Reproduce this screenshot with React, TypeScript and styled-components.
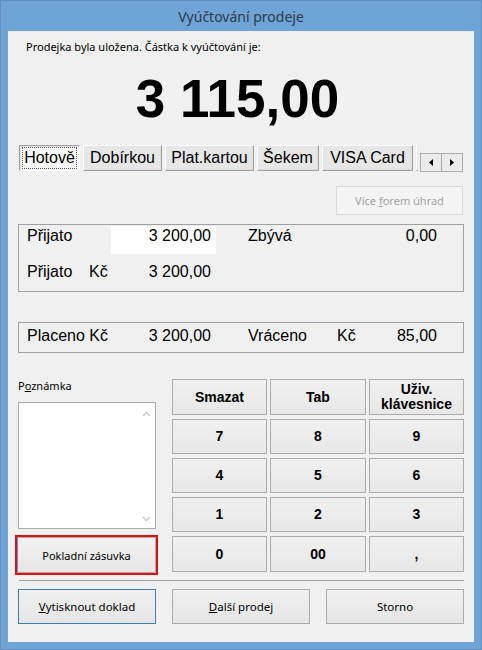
import styled, { createGlobalStyle } from "styled-components";

const GlobalStyle = createGlobalStyle`
  html, body {
    margin: 0;
    padding: 0;
    background: #6fa4d9;
  }
  * {
    box-sizing: border-box;
  }
`;

const UI_FONT = `"Noto Sans", "Open Sans", sans-serif`;
const ARIAL = `"Liberation Sans", Arial, sans-serif`;

// last tab is cut off by the scroll arrows, only its edge shows
const tabs = [
  { label: "Hotově", w: 61 },
  { label: "Dobírkou", w: 79 },
  { label: "Plat.kartou", w: 89 },
  { label: "Šekem", w: 62 },
  { label: "VISA Card", w: 91 },
  { label: "", w: 84 },
];

const keys = [
  ["Smazat", "Tab", "Uživ.\nklávesnice"],
  ["7", "8", "9"],
  ["4", "5", "6"],
  ["1", "2", "3"],
  ["0", "00", ","],
];

const App = (): JSX.Element => {
  return (
    <>
      <GlobalStyle />
      <Window>
        <TitleBar>Vyúčtování prodeje</TitleBar>
        <Client>
          <Intro>Prodejka byla uložena. Částka k vyúčtování je:</Intro>
          <Amount>3 115,00</Amount>

          <TabsRow>
            <TabStrip>
              {tabs.map((t, i) => (
                <Tab key={i} $w={t.w} $active={i === 0}>
                  {i === 0 ? <Focus>{t.label}</Focus> : t.label}
                </Tab>
              ))}
            </TabStrip>
            <Arrows>
              <ArrowBtn>
                <svg width="4" height="7" viewBox="0 0 4 7">
                  <path d="M4 0 L0 3.5 L4 7 Z" fill="#000" />
                </svg>
              </ArrowBtn>
              <ArrowBtn>
                <svg width="4" height="7" viewBox="0 0 4 7">
                  <path d="M0 0 L4 3.5 L0 7 Z" fill="#000" />
                </svg>
              </ArrowBtn>
            </Arrows>
          </TabsRow>

          <MoreButton disabled>
            Více <u>f</u>orem úhrad
          </MoreButton>

          <Panel $h={68}>
            <Grid>
              <Cell>Přijato</Cell>
              <Cell />
              <ValueBox>3 200,00</ValueBox>
              <Cell />
              <Cell>Zbývá</Cell>
              <Cell />
              <Cell $right>0,00</Cell>

              <Cell>Přijato</Cell>
              <Cell>Kč</Cell>
              <Cell $right $pr={5}>
                3 200,00
              </Cell>
              <Cell />
              <Cell />
              <Cell />
              <Cell />
            </Grid>
          </Panel>

          <Panel $h={31} $mt={30}>
            <Grid $pt={3}>
              <Cell $span={2}>Placeno Kč</Cell>
              <Cell $right $pr={5}>
                3 200,00
              </Cell>
              <Cell />
              <Cell>Vráceno</Cell>
              <Cell>Kč</Cell>
              <Cell $right>85,00</Cell>
            </Grid>
          </Panel>

          <Lower>
            <NoteColumn>
              <NoteLabel>
                P<u>o</u>známka
              </NoteLabel>
              <NoteBox>
                <NoteText />
                <ScrollBar>
                  <svg width="9" height="6" viewBox="0 0 9 6">
                    <path d="M1 5 L4.5 1.5 L8 5" stroke="#c8c8c8" strokeWidth="1.4" fill="none" />
                  </svg>
                  <svg width="9" height="6" viewBox="0 0 9 6">
                    <path d="M1 1 L4.5 4.5 L8 1" stroke="#c8c8c8" strokeWidth="1.4" fill="none" />
                  </svg>
                </ScrollBar>
              </NoteBox>
              <Highlight>
                <DrawerButton>Pokladní zásuvka</DrawerButton>
              </Highlight>
            </NoteColumn>

            <Keypad>
              {keys.flat().map((k, i) => (
                <Key key={i}>{k}</Key>
              ))}
            </Keypad>
          </Lower>

          <Separator />

          <Footer>
            <FooterButton $default>
              <u>V</u>ytisknout doklad
            </FooterButton>
            <FooterButton>
              <u>D</u>alší prodej
            </FooterButton>
            <FooterButton>Storno</FooterButton>
          </Footer>
        </Client>
      </Window>
    </>
  );
};

export default App;

const Window = styled.div`
  width: 482px;
  height: 650px;
  background: #6fa4d9;
  border: 1px solid #5c8fc4;
  display: flex;
  flex-direction: column;
`;

const TitleBar = styled.div`
  height: 30px;
  line-height: 31px;
  text-align: center;
  font-family: ${UI_FONT};
  font-size: 14px;
  color: #2e3a46;
`;

const Client = styled.div`
  margin: 0 7px;
  height: 611px;
  background: #f0f0f0;
  padding: 0 10px 0 10px;
  display: flex;
  flex-direction: column;
`;

const Intro = styled.div`
  margin-top: 8px;
  padding-left: 8px;
  height: 16px;
  line-height: 16px;
  font-family: ${UI_FONT};
  font-size: 11px;
  color: #000;
  white-space: nowrap;
`;

const Amount = styled.div`
  height: 90px;
  padding: 14px 7px 0 0;
  line-height: 60px;
  text-align: center;
  font-family: ${ARIAL};
  font-weight: bold;
  font-size: 53px;
  color: #000;
`;

const TabsRow = styled.div`
  height: 27px;
  display: flex;
  align-items: flex-start;
  gap: 2px;
  padding-left: 1px;
`;

const TabStrip = styled.div`
  width: 399px;
  height: 26px;
  display: flex;
  gap: 3px;
  overflow: hidden;
`;

const Tab = styled.div<{ $w: number; $active?: boolean }>`
  flex: 0 0 ${(p) => p.$w}px;
  height: 26px;
  display: flex;
  align-items: center;
  justify-content: center;
  font-family: ${ARIAL};
  font-size: 16px;
  color: #000;
  white-space: nowrap;
  background: ${(p) => (p.$active ? "#f9f9f9" : "#e6e6e6")};
  border: 1px solid;
  border-color: ${(p) =>
    p.$active ? "#a0a0a0 #ffffff #ffffff #a0a0a0" : "#ffffff #a0a0a0 #a0a0a0 #ffffff"};
  box-shadow: ${(p) =>
    p.$active ? "inset 1px 1px 0 #e3e3e3" : "inset -1px -1px 0 #dcdcdc"};
`;

const Focus = styled.span`
  padding: 1px 1px;
  outline: 1px dotted #555;
  outline-offset: 0;
`;

const Arrows = styled.div`
  margin-top: 8px;
  display: flex;
`;

const ArrowBtn = styled.div`
  width: 22px;
  height: 19px;
  display: flex;
  align-items: center;
  justify-content: center;
  background: #ebebeb;
  border: 1px solid #acacac;
  & + & {
    border-left: none;
    width: 21px;
  }
`;

const MoreButton = styled.button`
  margin-top: 14px;
  align-self: flex-end;
  margin-right: 1px;
  width: 127px;
  height: 29px;
  padding: 0;
  background: #f4f4f4;
  border: 1px solid #d9d9d9;
  font-family: ${UI_FONT};
  font-size: 11px;
  color: #a3a3a3;
`;

const Panel = styled.div<{ $h: number; $mt?: number }>`
  margin-top: ${(p) => p.$mt ?? 9}px;
  height: ${(p) => p.$h}px;
  border: 1px solid #a0a0a0;
`;

const Grid = styled.div<{ $pt?: number }>`
  padding: ${(p) => p.$pt ?? 1}px 0 0 8px;
  display: grid;
  grid-template-columns: 62px 22px 105px 32px 89px 30px 70px;
  grid-auto-rows: 28px;
  row-gap: 8px;
  font-family: ${ARIAL};
  font-size: 16px;
  color: #000;
`;

const Cell = styled.div<{ $right?: boolean; $pr?: number; $span?: number }>`
  padding-top: 2px;
  line-height: 16px;
  white-space: nowrap;
  text-align: ${(p) => (p.$right ? "right" : "left")};
  padding-right: ${(p) => p.$pr ?? 0}px;
  grid-column: ${(p) => (p.$span ? `span ${p.$span}` : "auto")};
`;

const ValueBox = styled(Cell)`
  background: #fff;
  text-align: right;
  padding-right: 5px;
`;

const Lower = styled.div`
  margin-top: 26px;
  height: 196px;
  display: grid;
  grid-template-columns: 138px 292px;
  column-gap: 16px;
`;

const NoteColumn = styled.div`
  display: flex;
  flex-direction: column;
`;

const NoteLabel = styled.div`
  height: 14px;
  line-height: 14px;
  font-family: ${UI_FONT};
  font-size: 11px;
  color: #000;
`;

const NoteBox = styled.div`
  margin-top: 9px;
  height: 127px;
  background: #fff;
  border: 1px solid #acacac;
  display: flex;
`;

const NoteText = styled.textarea`
  flex: 1;
  border: none;
  resize: none;
  outline: none;
  background: transparent;
`;

const ScrollBar = styled.div`
  width: 17px;
  display: flex;
  flex-direction: column;
  justify-content: space-between;
  align-items: center;
  padding: 8px 0 6px;
`;

const Highlight = styled.div`
  margin: 6px 0 0 -3px;
  width: 143px;
  height: 40px;
  border: 2px solid #e01010;
  display: flex;
`;

const DrawerButton = styled.button`
  flex: 1;
  margin: 0;
  padding: 0;
  background: linear-gradient(#f2f2f2, #e6e6e6);
  border: 1px solid #acacac;
  border-left-color: #5f9ad6;
  font-family: ${UI_FONT};
  font-size: 11px;
  color: #000;
`;

const Keypad = styled.div`
  display: grid;
  grid-template-columns: 95px 96px 95px;
  grid-template-rows: 36px 35px 35px 35px 36px;
  column-gap: 3px;
  row-gap: 4px;
`;

const Key = styled.button`
  margin: 0;
  padding: 0;
  background: linear-gradient(#f0f0f0, #e7e7e7);
  border: 1px solid #acacac;
  font-family: ${ARIAL};
  font-weight: bold;
  font-size: 14px;
  line-height: 15px;
  color: #000;
  white-space: pre-line;
`;

const Separator = styled.div`
  margin: 5px 0 0 1px;
  height: 1px;
  background: #a0a0a0;
`;

const Footer = styled.div`
  margin-top: 8px;
  display: grid;
  grid-template-columns: repeat(3, 138px);
  column-gap: 16px;
`;

const FooterButton = styled.button<{ $default?: boolean }>`
  height: 35px;
  margin: 0;
  padding: 0;
  background: linear-gradient(#f0f0f0, #e5e5e5);
  border: 1px solid ${(p) => (p.$default ? "#3c7fb1" : "#acacac")};
  font-family: ${UI_FONT};
  font-size: 11.5px;
  color: #000;
`;
